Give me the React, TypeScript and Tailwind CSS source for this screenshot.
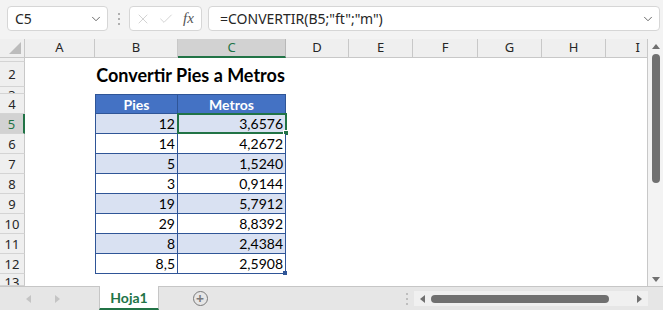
import { ChevronDown, X, Check } from "lucide-react";

const cols = [
  { l: "A", w: "w-[70px]" },
  { l: "B", w: "w-[83px]" },
  { l: "C", w: "w-[108px]" },
  { l: "D", w: "w-[63px]" },
  { l: "E", w: "w-[64px]" },
  { l: "F", w: "w-[65px]" },
  { l: "G", w: "w-[64px]" },
  { l: "H", w: "w-[64px]" },
];

const data: [string, string][] = [
  ["12", "3,6576"],
  ["14", "4,2672"],
  ["5", "1,5240"],
  ["3", "0,9144"],
  ["19", "5,7912"],
  ["29", "8,8392"],
  ["8", "2,4384"],
  ["8,5", "2,5908"],
];

const cellFont = { fontFamily: "Lato, 'Open Sans', sans-serif" };
const uiFont = { fontFamily: "'Noto Sans', 'Open Sans', sans-serif" };

const RowHead = ({
  n,
  h,
  align = "items-center",
  active = false,
}: {
  n: string;
  h: string;
  align?: string;
  active?: boolean;
}) => (
  <div
    className={`${h} w-[25px] shrink-0 flex ${align} justify-center overflow-hidden border-b border-[#d4d4d4] text-[13px] leading-[16px] ${
      active
        ? "bg-[#d2d2d2] text-[#217346] border-r-2 border-r-[#217346]"
        : "bg-[#efefef] text-[#262626] border-r border-r-[#c8c8c8]"
    }`}
    style={uiFont}
  >
    {n}
  </div>
);

const Rest = () => <div className="flex-1 bg-white" />;

export default function App() {
  return (
    <div className="w-[663px] h-[310px] overflow-hidden bg-[#f3f3f3] flex flex-col" style={uiFont}>
      {/* formula bar */}
      <div className="h-[39px] shrink-0 flex items-center pb-[2px]">
        <div className="ml-[7px] w-[101px] h-[25px] bg-white border border-[#d6d6d6] rounded-[4px] flex items-center justify-between pl-[7px] pr-[4px]">
          <span className="text-[14px] text-[#262626]">C5</span>
          <ChevronDown size={14} strokeWidth={1.5} className="text-[#555]" />
        </div>
        <div className="w-[21px] flex flex-col items-center gap-[3px]">
          <span className="w-[2px] h-[2px] rounded-full bg-[#9a9a9a]" />
          <span className="w-[2px] h-[2px] rounded-full bg-[#9a9a9a]" />
          <span className="w-[2px] h-[2px] rounded-full bg-[#9a9a9a]" />
        </div>
        <div className="w-[73px] h-[25px] bg-white border border-[#d6d6d6] rounded-[4px] flex items-center pl-[5px] gap-[7px]">
          <X size={16} strokeWidth={1} className="text-[#bdbdbd]" />
          <Check size={16} strokeWidth={1} className="text-[#bdbdbd]" />
          <span className="ml-[2px] text-[15px] italic text-[#555]" style={{ fontFamily: "'Liberation Serif', serif" }}>
            fx
          </span>
        </div>
        <div className="ml-[6px] w-[452px] h-[25px] bg-white border border-[#d6d6d6] rounded-[4px] flex items-center justify-between pl-[11px] pr-[4px]">
          <span className="text-[14px] text-[#262626]">=CONVERTIR(B5;"ft";"m")</span>
          <ChevronDown size={14} strokeWidth={1.5} className="text-[#555]" />
        </div>
      </div>

      {/* sheet */}
      <div className="flex h-[247px] shrink-0">
        <div className="w-[648px] flex flex-col border-r border-[#c8c8c8] bg-white">
          {/* column header */}
          <div className="h-[19px] flex shrink-0 bg-[#efefef]">
            <div className="w-[25px] shrink-0 border-r border-b border-[#c8c8c8] relative">
              <div
                className="absolute right-[3px] bottom-[3px] w-0 h-0 border-l-[12px] border-l-transparent border-b-[12px] border-b-[#bcbcbc]"
              />
            </div>
            {cols.map((c) => (
              <div
                key={c.l}
                className={`${c.w} shrink-0 flex items-center justify-center text-[13px] border-r ${
                  c.l === "C"
                    ? "bg-[#d2d2d2] text-[#217346] border-b-2 border-b-[#217346] border-r-[#b8b8b8]"
                    : "text-[#262626] border-b border-[#c8c8c8]"
                }`}
              >
                {c.l}
              </div>
            ))}
            <div className="flex-1 flex items-center justify-end pr-[7px] text-[13px] text-[#262626] border-b border-[#c8c8c8]">
              I
            </div>
          </div>

          {/* row 1 */}
          <div className="h-[4px] flex shrink-0">
            <RowHead n="1" h="h-[4px]" align="items-end" />
            <Rest />
          </div>
          {/* row 2 title */}
          <div className="h-[25px] flex shrink-0">
            <RowHead n="2" h="h-[25px]" />
            <div className="w-[70px] shrink-0" />
            <div
              className="w-[191px] shrink-0 flex items-end justify-center pb-[1px] text-[18px] font-bold text-black leading-[22px]"
              style={cellFont}
            >
              Convertir Pies a Metros
            </div>
            <Rest />
          </div>
          {/* row 3 */}
          <div className="h-[7px] flex shrink-0">
            <RowHead n="3" h="h-[7px]" align="items-start" />
            <Rest />
          </div>
          {/* row 4 header */}
          <div className="h-[20px] flex shrink-0">
            <RowHead n="4" h="h-[20px]" />
            <div className="w-[70px] shrink-0" />
            <div
              className="w-[83px] shrink-0 bg-[#4472c4] border border-[#2f5597] flex items-center justify-center text-white font-bold text-[14px]"
              style={cellFont}
            >
              Pies
            </div>
            <div
              className="w-[108px] shrink-0 bg-[#4472c4] border-y border-r border-[#2f5597] flex items-center justify-center text-white font-bold text-[14px]"
              style={cellFont}
            >
              Metros
            </div>
            <Rest />
          </div>
          {data.map(([p, m], i) => {
            const fill = i % 2 === 0 ? "bg-[#d9e1f2]" : "bg-white";
            return (
              <div key={i} className="h-[20px] flex shrink-0">
                <RowHead n={String(i + 5)} h="h-[20px]" active={i === 0} />
                <div className="w-[70px] shrink-0" />
                <div
                  className={`w-[83px] shrink-0 ${fill} border-x border-b border-[#2f5597] flex items-center justify-end pr-[2px] text-[14px] text-black`}
                  style={cellFont}
                >
                  {p}
                </div>
                <div
                  className={`w-[108px] shrink-0 ${fill} border-r border-b border-[#2f5597] flex items-center justify-end pr-[2px] text-[14px] text-black relative`}
                  style={cellFont}
                >
                  {m}
                  {i === 0 && (
                    <div className="absolute -left-[1px] -top-[1px] -right-[2px] -bottom-[1px] border-2 border-[#217346]">
                      <div className="absolute -right-[4px] -bottom-[4px] w-[6px] h-[6px] bg-[#217346] border border-white" />
                    </div>
                  )}
                  {i === data.length - 1 && (
                    <div className="absolute -right-[2px] -bottom-[2px] w-[4px] h-[4px] bg-[#2f5597]" />
                  )}
                </div>
                <Rest />
              </div>
            );
          })}
          {/* row 13 */}
          <div className="flex-1 flex overflow-hidden">
            <RowHead n="13" h="h-[12px]" align="items-start" />
            <Rest />
          </div>
        </div>

        {/* vertical scrollbar */}
        <div className="w-[15px] bg-[#f3f3f3] flex flex-col items-center pt-[5px] pb-[4px]">
          <div className="w-0 h-0 border-x-[4px] border-x-transparent border-b-[5px] border-b-[#707070]" />
          <div className="mt-[5px] w-[8px] h-[129px] rounded-full bg-[#707070]" />
          <div className="flex-1" />
          <div className="w-0 h-0 border-x-[4px] border-x-transparent border-t-[5px] border-t-[#707070]" />
        </div>
      </div>

      {/* sheet tabs */}
      <div className="flex-1 flex items-stretch bg-[#e6e6e6] border-t border-[#c6c6c6]">
        <div className="w-[99px] flex items-center pl-[26px] gap-[24px]">
          <div className="w-0 h-0 border-y-[4px] border-y-transparent border-r-[5px] border-r-[#c4c4c4]" />
          <div className="w-0 h-0 border-y-[4px] border-y-transparent border-l-[5px] border-l-[#c4c4c4]" />
        </div>
        <div className="-mt-[1px] w-[60px] bg-white border-x border-[#c6c6c6] border-b-2 border-b-[#217346] flex items-center justify-center text-[14px] font-bold text-[#217346]" style={cellFont}>
          Hoja1
        </div>
        <div className="w-[82px] flex items-center justify-center">
          <div className="w-[15px] h-[15px] rounded-full border-[1.5px] border-[#7a7a7a] flex items-center justify-center text-[#7a7a7a] text-[14px] leading-none font-bold">
            +
          </div>
        </div>
        <div className="flex-1" />
        <div className="w-[14px] flex flex-col items-center justify-center gap-[3px]">
          <span className="w-[2px] h-[2px] rounded-full bg-[#b0b0b0]" />
          <span className="w-[2px] h-[2px] rounded-full bg-[#b0b0b0]" />
          <span className="w-[2px] h-[2px] rounded-full bg-[#b0b0b0]" />
        </div>
        <div className="w-[234px] my-[4px] bg-[#f0f0f0] flex items-center px-[6px]">
          <div className="w-0 h-0 border-y-[4px] border-y-transparent border-r-[5px] border-r-[#707070]" />
          <div className="ml-[6px] w-[178px] h-[8px] rounded-full bg-[#707070]" />
          <div className="flex-1" />
          <div className="w-0 h-0 border-y-[4px] border-y-transparent border-l-[5px] border-l-[#707070]" />
        </div>
        <div className="w-[15px]" />
      </div>
    </div>
  );
}
